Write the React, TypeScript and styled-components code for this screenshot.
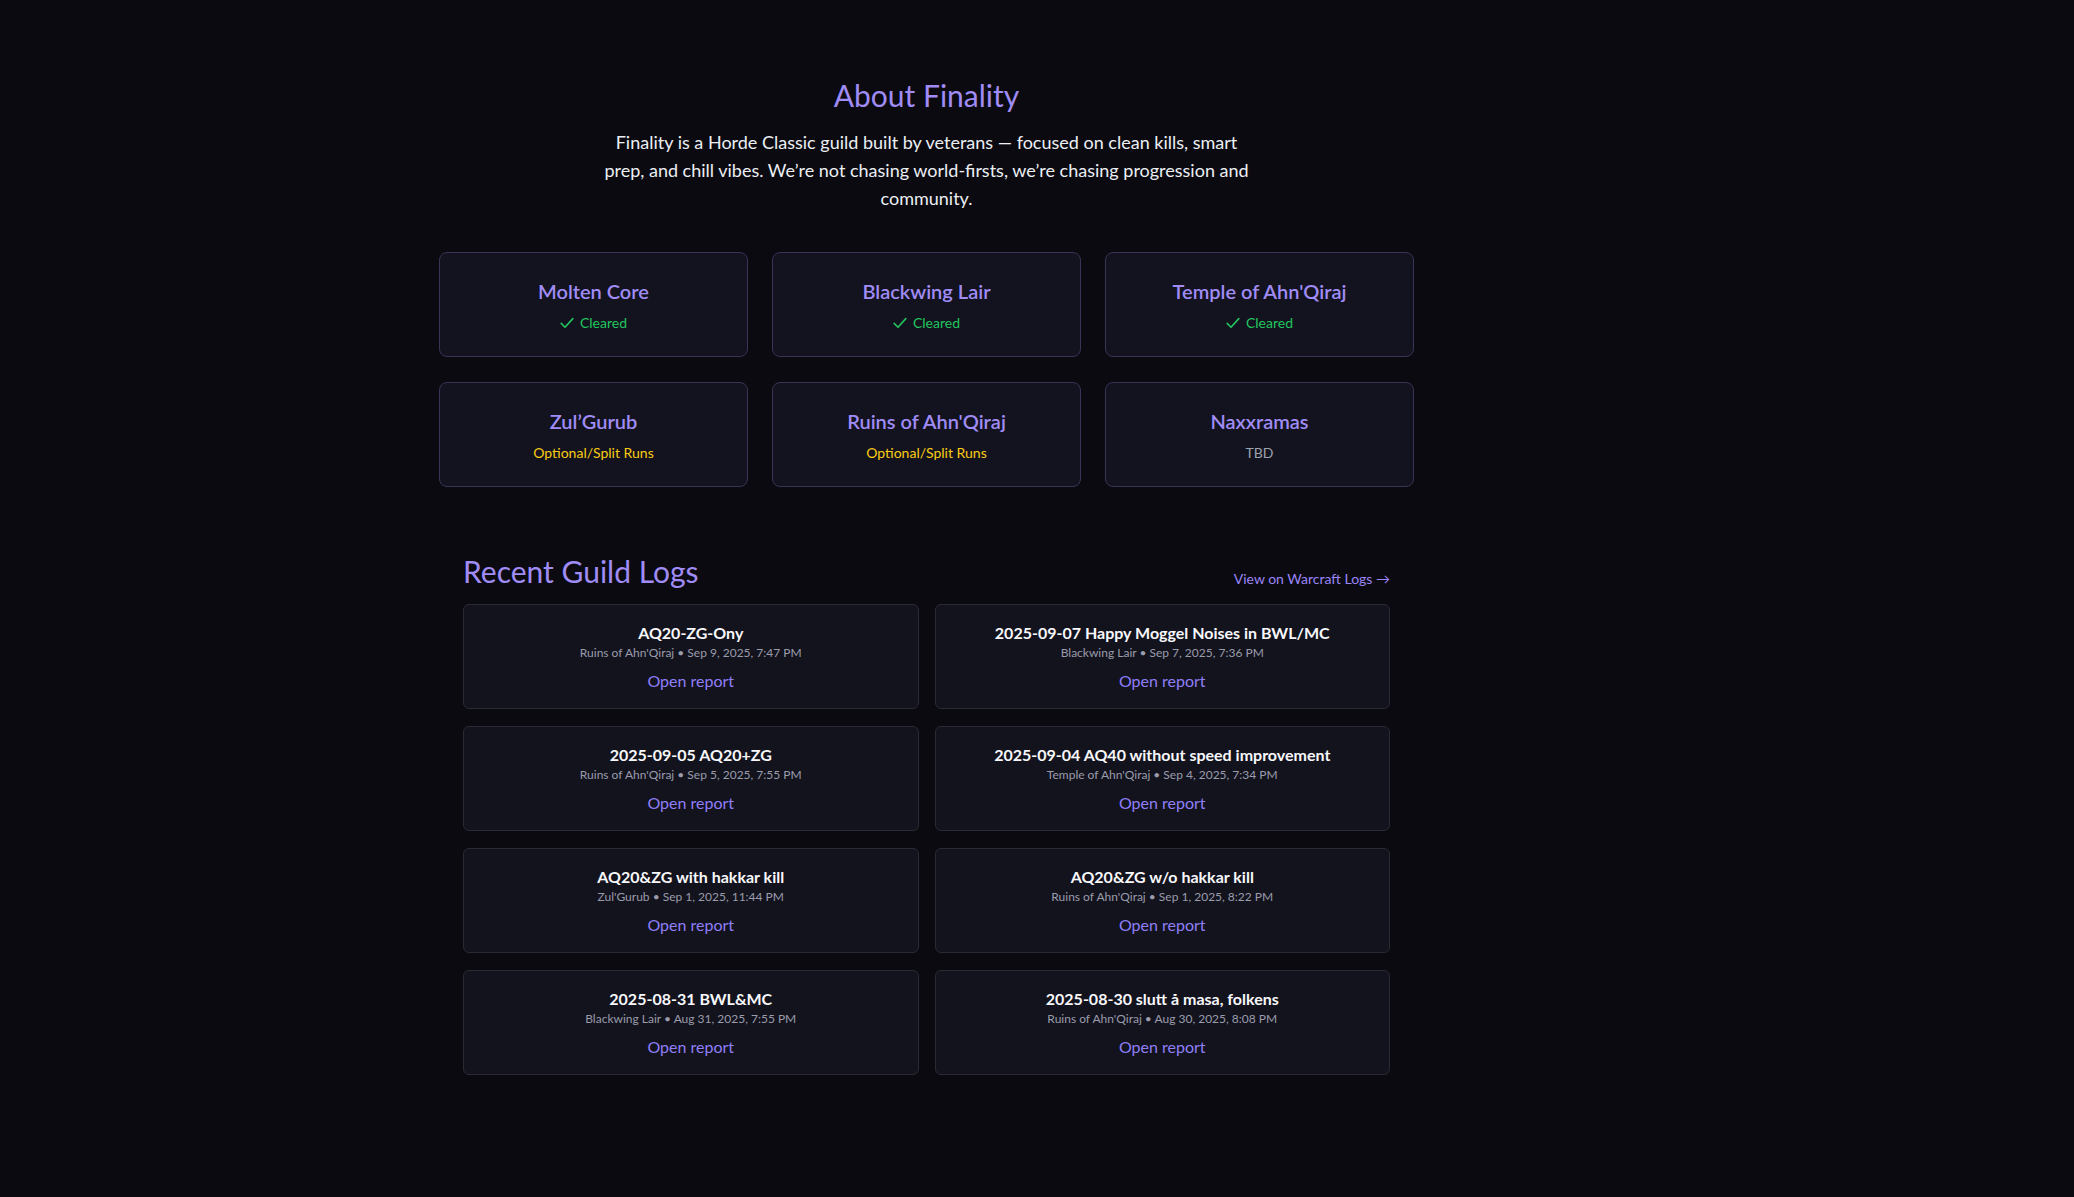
import React from "react";
import styled, { createGlobalStyle } from "styled-components";

const GlobalStyle = createGlobalStyle`
  html, body {
    margin: 0;
    padding: 0;
    background: #0b0a10;
  }
  body {
    font-family: "Segoe UI", Lato, "Noto Sans", sans-serif;
    color: #e5e7eb;
    min-height: 1197px;
  }
  * { box-sizing: border-box; }
`;

const Page = styled.main`
  width: 1853px;
  padding: 77px 0 120px;
  display: flex;
  flex-direction: column;
  align-items: center;
`;

const Title = styled.h1`
  margin: 0;
  font-size: 30px;
  line-height: 36px;
  font-weight: 400;
  color: #a08cf6;
`;

const Intro = styled.p`
  margin: 15px 0 0;
  max-width: 655px;
  text-align: center;
  font-size: 18px;
  line-height: 28px;
  color: #eceff4;
`;

const RaidGrid = styled.div`
  margin-top: 40px;
  width: 975px;
  display: grid;
  grid-template-columns: repeat(3, 1fr);
  gap: 25px 24px;
`;

const RaidCard = styled.div`
  height: 105px;
  padding: 24px 16px 23px;
  border: 1px solid #3a3356;
  border-radius: 8px;
  background: #13131f;
  display: flex;
  flex-direction: column;
  align-items: center;
  gap: 8px;
`;

const RaidName = styled.div`
  font-size: 20px;
  line-height: 28px;
  font-weight: 600;
  color: #a08cf6;
`;

const statusColors: Record<string, string> = {
  cleared: "#22c55e",
  optional: "#facc15",
  tbd: "#9ca3af",
};

const RaidStatus = styled.div<{ $kind: string }>`
  display: flex;
  align-items: center;
  gap: 6px;
  font-size: 14px;
  line-height: 20px;
  color: ${(p) => statusColors[p.$kind]};
`;

const LogsSection = styled.section`
  margin-top: 66px;
  width: 927px;
`;

const LogsHeader = styled.div`
  display: flex;
  justify-content: space-between;
  align-items: flex-end;
  margin-bottom: 15px;
`;

const LogsTitle = styled.h2`
  margin: 0;
  font-size: 30px;
  line-height: 36px;
  font-weight: 400;
  color: #a08cf6;
`;

const ExternalLink = styled.a`
  font-size: 14px;
  line-height: 20px;
  color: #9a86f7;
  text-decoration: none;
`;

const LogsGrid = styled.div`
  display: grid;
  grid-template-columns: repeat(2, 1fr);
  gap: 17px 16px;
`;

const LogCard = styled.div`
  height: 105px;
  padding: 16px;
  border: 1px solid #2a2a36;
  border-radius: 6px;
  background: #13131e;
  display: flex;
  flex-direction: column;
  align-items: center;
`;

const LogTitle = styled.div`
  font-size: 16px;
  line-height: 24px;
  font-weight: 700;
  color: #f8f8fb;
`;

const LogMeta = styled.div`
  font-size: 12px;
  line-height: 16px;
  color: #9a9cab;
`;

const LogLink = styled.a`
  margin-top: 8px;
  font-size: 16px;
  line-height: 24px;
  color: #8f7ff7;
  text-decoration: none;
`;

const CheckIcon = () => (
  <svg width="14" height="12" viewBox="0 0 14 12" fill="none">
    <path d="M1.2 6.4 L5 10.2 L12.8 1.6" stroke="#22c55e" strokeWidth="1.6" strokeLinecap="round" strokeLinejoin="round" />
  </svg>
);

const raids = [
  { name: "Molten Core", kind: "cleared", label: "Cleared" },
  { name: "Blackwing Lair", kind: "cleared", label: "Cleared" },
  { name: "Temple of Ahn'Qiraj", kind: "cleared", label: "Cleared" },
  { name: "Zul’Gurub", kind: "optional", label: "Optional/Split Runs" },
  { name: "Ruins of Ahn'Qiraj", kind: "optional", label: "Optional/Split Runs" },
  { name: "Naxxramas", kind: "tbd", label: "TBD" },
];

const logs = [
  { title: "AQ20-ZG-Ony", meta: "Ruins of Ahn'Qiraj • Sep 9, 2025, 7:47 PM" },
  { title: "2025-09-07 Happy Moggel Noises in BWL/MC", meta: "Blackwing Lair • Sep 7, 2025, 7:36 PM" },
  { title: "2025-09-05 AQ20+ZG", meta: "Ruins of Ahn'Qiraj • Sep 5, 2025, 7:55 PM" },
  { title: "2025-09-04 AQ40 without speed improvement", meta: "Temple of Ahn'Qiraj • Sep 4, 2025, 7:34 PM" },
  { title: "AQ20&ZG with hakkar kill", meta: "Zul'Gurub • Sep 1, 2025, 11:44 PM" },
  { title: "AQ20&ZG w/o hakkar kill", meta: "Ruins of Ahn'Qiraj • Sep 1, 2025, 8:22 PM" },
  { title: "2025-08-31 BWL&MC", meta: "Blackwing Lair • Aug 31, 2025, 7:55 PM" },
  { title: "2025-08-30 slutt å masa, folkens", meta: "Ruins of Ahn'Qiraj • Aug 30, 2025, 8:08 PM" },
];

export default function App() {
  return (
    <>
      <GlobalStyle />
      <Page>
        <Title>About Finality</Title>
        <Intro>
          Finality is a Horde Classic guild built by veterans — focused on clean kills, smart prep, and chill vibes.
          We’re not chasing world-firsts, we’re chasing progression and community.
        </Intro>
        <RaidGrid>
          {raids.map((r) => (
            <RaidCard key={r.name}>
              <RaidName>{r.name}</RaidName>
              <RaidStatus $kind={r.kind}>
                {r.kind === "cleared" && <CheckIcon />}
                {r.label}
              </RaidStatus>
            </RaidCard>
          ))}
        </RaidGrid>
        <LogsSection>
          <LogsHeader>
            <LogsTitle>Recent Guild Logs</LogsTitle>
            <ExternalLink href="#">View on Warcraft Logs →</ExternalLink>
          </LogsHeader>
          <LogsGrid>
            {logs.map((l) => (
              <LogCard key={l.title}>
                <LogTitle>{l.title}</LogTitle>
                <LogMeta>{l.meta}</LogMeta>
                <LogLink href="#">Open report</LogLink>
              </LogCard>
            ))}
          </LogsGrid>
        </LogsSection>
      </Page>
    </>
  );
}
